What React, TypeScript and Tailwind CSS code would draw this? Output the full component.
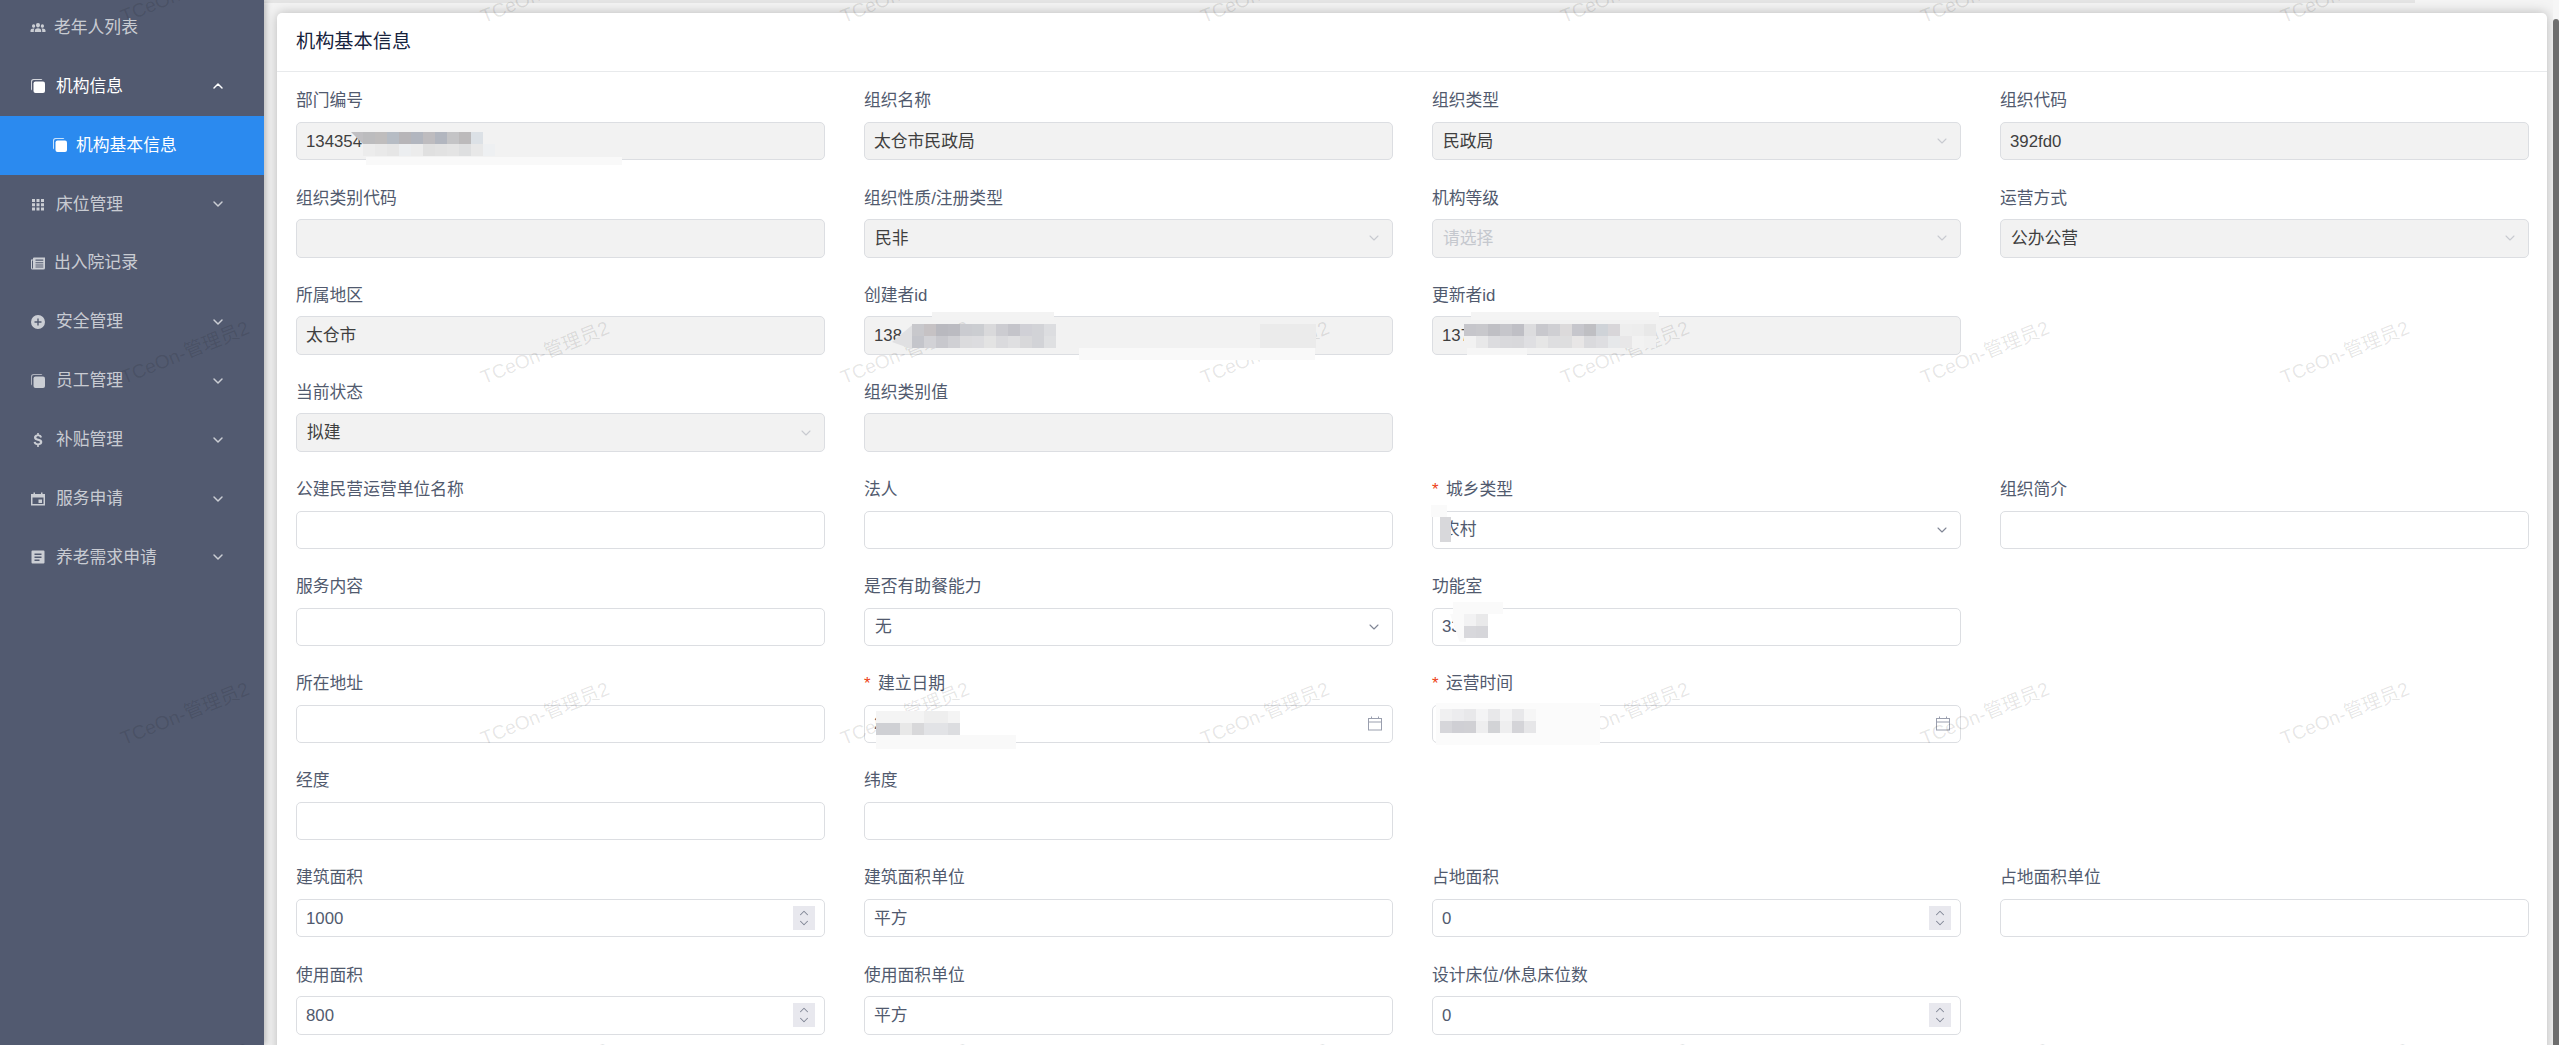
import { ReactNode } from 'react';
import { ChevronDown, ChevronUp } from 'lucide-react';

type IconName = 'people' | 'copy' | 'apps' | 'paper' | 'add' | 'usd' | 'today' | 'list';

function MenuIcon({ name }: { name: IconName }) {
  return (
    <svg viewBox="0 0 16 16" className="h-[16px] w-[16px] shrink-0" fill="currentColor">
      {name === 'people' && (
        <path d="M8 4a2 2 0 0 1 2 2.2c0 1.2-.9 2.3-2 2.3S6 7.400 6 6.200A2 2 0 0 1 8 4zM3.600 5.200a1.600 1.600 0 0 1 1.600 1.700c0 1-.7 1.900-1.600 1.900S2 7.900 2 6.900a1.600 1.600 0 0 1 1.600-1.700zM12.400 5.200A1.600 1.600 0 0 1 14 6.900c0 1-.7 1.900-1.600 1.900s-1.600-.9-1.600-1.900a1.600 1.600 0 0 1 1.600-1.700zM8 9.200c2 0 3.200 1 3.200 2.500V13H4.800v-1.300C4.800 10.200 6 9.200 8 9.200zM3.500 9.500c.4 0 .7 0 1 .1-.5.500-.7 1.200-.7 2V13H.5v-1.400c0-1.300 1.200-2.100 3-2.100zM12.500 9.500c1.800 0 3 .8 3 2.100V13h-3.300v-1.400c0-.8-.2-1.500-.7-2 .3-.1.600-.1 1-.1z" />
      )}
      {name === 'copy' && (
        <>
          <path d="M3.500 1H11a1.500 1.500 0 0 1 1.400 1H4A2 2 0 0 0 2 4v8.400A1.500 1.500 0 0 1 1 11V3.500A2.500 2.500 0 0 1 3.500 1z" opacity="0.75" />
          <rect x="3.500" y="3.500" width="11.500" height="11.500" rx="2" />
        </>
      )}
      {name === 'apps' && (
        <path d="M2 3h3v3H2zM6.500 3h3v3h-3zM11 3h3v3h-3zM2 7.200h3v3H2zM6.500 7.200h3v3h-3zM11 7.200h3v3h-3zM2 11.400h3v3H2zM6.500 11.400h3v3h-3zM11 11.400h3v3h-3z" />
      )}
      {name === 'paper' && (
        <path
          fillRule="evenodd"
          d="M4 2.500h11V13a1.500 1.500 0 0 1-1.500 1.500h-11A1.500 1.500 0 0 1 1 13V4.500h2V3.500a1 1 0 0 1 1-1zM2 5.500V13a.5.500 0 0 0 1 0V5.500zM5.500 4.500v1.200h7.800V4.500zM5.500 7.200v1h7.800v-1zM5.500 9.500v1h7.800v-1zM5.500 11.500v1h7.800v-1z"
        />
      )}
      {name === 'add' && (
        <path
          fillRule="evenodd"
          d="M8 1a7 7 0 1 1 0 14A7 7 0 0 1 8 1zM7.300 4.500v2.800H4.500v1.400h2.800v2.800h1.400V8.700h2.800V7.300H8.700V4.500z"
        />
      )}
      {name === 'usd' && (
        <path d="M7.200 1h1.600v1.500c1.700.2 2.900 1.100 3.200 2.800l-2 .4c-.2-.9-.9-1.400-1.900-1.400-1 0-1.700.4-1.700 1.100 0 .7.600 1 2.100 1.400 2.200.5 3.800 1.200 3.800 3.300 0 1.800-1.300 2.900-3.500 3.100V15H7.200v-1.800C5.200 13 3.900 11.900 3.600 10.100l2.100-.4c.2 1.100 1 1.700 2.300 1.700 1.200 0 1.900-.5 1.900-1.200 0-.8-.700-1.100-2.300-1.500-2-.5-3.600-1.200-3.600-3.200 0-1.700 1.200-2.800 3.200-3z" />
      )}
      {name === 'today' && (
        <path
          fillRule="evenodd"
          d="M3.500 1.500h1.500v1.500h6V1.500h1.500V3H15v11.500H1V3h2.500zM2.500 6.500v6.500h11V6.500zM8.500 8.500H12V12H8.500z"
        />
      )}
      {name === 'list' && (
        <path
          fillRule="evenodd"
          d="M2.500 1.500h11a1 1 0 0 1 1 1v11a1 1 0 0 1-1 1h-11a1 1 0 0 1-1-1v-11a1 1 0 0 1 1-1zM4.500 4.500V6h7V4.500zM4.500 7.500V9h7V7.500zM4.500 10.500V12h5v-1.500z"
        />
      )}
    </svg>
  );
}

const menu: { label: string; icon: IconName; chevron?: 'up' | 'down'; active?: boolean; sub?: boolean; gap?: string }[] = [
  { label: '老年人列表', icon: 'people', gap: 'gap-[8px]' },
  { label: '机构信息', icon: 'copy', chevron: 'up', active: true },
  { label: '机构基本信息', icon: 'copy', sub: true },
  { label: '床位管理', icon: 'apps', chevron: 'down' },
  { label: '出入院记录', icon: 'paper', gap: 'gap-[8px]' },
  { label: '安全管理', icon: 'add', chevron: 'down' },
  { label: '员工管理', icon: 'copy', chevron: 'down' },
  { label: '补贴管理', icon: 'usd', chevron: 'down' },
  { label: '服务申请', icon: 'today', chevron: 'down' },
  { label: '养老需求申请', icon: 'list', chevron: 'down' },
];

function Sidebar() {
  return (
    <aside className="relative z-[1] h-full w-[264px] shrink-0 overflow-hidden bg-[#525a70] shadow-[2px_0_6px_rgba(0,0,0,0.25)]">
      <div className="-mt-[2px] flex flex-col">
        {menu.map((item) => (
          <div
            key={item.label}
            className={
              item.sub
                ? 'flex h-[58.9px] items-center gap-[8px] bg-[#2b8aef] pl-[52px] text-white'
                : `flex h-[58.9px] items-center pl-[30px] pr-[38px] ${item.gap ?? 'gap-[10px]'} ${item.active ? 'text-white' : 'text-white/70'}`
            }
          >
            <MenuIcon name={item.icon} />
            <span className="flex-1">{item.label}</span>
            {item.chevron === 'up' && <ChevronUp size={16} strokeWidth={2.2} />}
            {item.chevron === 'down' && <ChevronDown size={16} strokeWidth={2.2} />}
          </div>
        ))}
      </div>
    </aside>
  );
}

// pixelated patches that hide values in the screenshot
function Mosaic({ className, rows }: { className: string; rows: string[][] }) {
  return (
    <div className={`absolute z-20 flex flex-col ${className}`}>
      {rows.map((row, r) => (
        <div key={r} className="flex">
          {row.map((c, i) => (
            <div key={i} className="h-[12px] w-[12px]" style={{ backgroundColor: c }} />
          ))}
        </div>
      ))}
    </div>
  );
}

function CalendarIcon() {
  return (
    <svg viewBox="0 0 16 16" className="-mt-[1px] h-[17px] w-[16px] text-[#9a9fae]" fill="none" stroke="currentColor" strokeWidth="1">
      <rect x="1.500" y="3" width="13" height="11.500" />
      <path d="M1.500 6.500h13M4.500 1v2M11.500 1v2" />
    </svg>
  );
}

function Spinner() {
  return (
    <div className="flex h-[24px] w-[22px] flex-col items-center justify-center bg-[#e8e8ee] text-[#808695]">
      <ChevronUp size={14} strokeWidth={1.8} className="-mb-[2px]" />
      <ChevronDown size={14} strokeWidth={1.8} className="-mt-[2px]" />
    </div>
  );
}

type FieldProps = {
  label?: string;
  value?: string;
  placeholder?: string;
  disabled?: boolean;
  required?: boolean;
  kind?: 'select' | 'date' | 'number';
  overlay?: ReactNode;
};

function Field({ label, value, placeholder, disabled, required, kind, overlay }: FieldProps) {
  if (!label) return <div />;
  return (
    <div className="flex flex-col">
      <div className="flex h-[24px] items-center pt-[2px] text-[#515a6e]">
        {required && <span className="w-[14px] text-[#ed4014]">*</span>}
        {label}
      </div>
      <div
        className={`relative mt-[10px] flex h-[38.4px] items-center justify-between rounded-[5px] border border-[#dcdee2] pl-[9px] pr-[9px] ${
          disabled ? 'bg-[#f2f2f2] text-[#3f3f3f]' : 'bg-white text-[#515a6e]'
        }`}
      >
        <span className={`${kind === 'select' ? 'pl-[1px]' : ''} ${placeholder ? 'text-[#c5c8ce]' : ''}`}>{value ?? placeholder}</span>
        {kind === 'select' && (
          <ChevronDown size={16} strokeWidth={1.6} className={disabled ? 'mr-[1px] text-[#c8cad0]' : 'mr-[1px] text-[#808695]'} />
        )}
        {kind === 'date' && <CalendarIcon />}
        {kind === 'number' && <Spinner />}
        {overlay}
      </div>
    </div>
  );
}

const fields: FieldProps[] = [
  {
    label: '部门编号',
    value: '134354',
    disabled: true,
    overlay: (
      <>
        <div className="absolute left-[69px] top-[34px] z-20 h-[8px] w-[256px] bg-[#f9f9f9]" />
        <div className="absolute left-[54px] top-[9px] z-20 h-[12px] w-[12px] bg-[#c0bfc2] [clip-path:polygon(0_0,100%_0,100%_100%)]" />
        <Mosaic
          className="left-[54px] top-[9px]"
          rows={[
            ['transparent', '#bcbcbe', '#bfbdbd', '#b6bcc4', '#b7b5b8', '#b2b6bf', '#bebcbf', '#b2b6bf', '#c4c4c6', '#bcbabb', '#dce1e6'],
            ['transparent', '#ececec', '#e9e9e9', '#e6e6e6', '#eceef0', '#ececec', '#e0e0e0', '#e2e2e2', '#e4e4e4', '#dedfe0', '#e8e8e8', '#eef0f2'],
          ]}
        />
      </>
    ),
  },
  { label: '组织名称', value: '太仓市民政局', disabled: true },
  { label: '组织类型', value: '民政局', disabled: true, kind: 'select' },
  { label: '组织代码', value: '392fd0', disabled: true },

  { label: '组织类别代码', disabled: true },
  { label: '组织性质/注册类型', value: '民非', disabled: true, kind: 'select' },
  { label: '机构等级', placeholder: '请选择', disabled: true, kind: 'select' },
  { label: '运营方式', value: '公办公营', disabled: true, kind: 'select' },

  { label: '所属地区', value: '太仓市', disabled: true },
  {
    label: '创建者id',
    value: '138',
    disabled: true,
    overlay: (
      <>
        <div className="absolute left-[67px] top-[-5px] z-20 h-[8px] w-[122px] bg-[#f3f3f3]" />
        <div className="absolute left-[214px] top-[31px] z-20 h-[12px] w-[236px] bg-[#f9f9f9]" />
        <div className="absolute left-[27px] top-[8px] z-20 h-[24px] w-[20px] bg-[#e0e0e2] [clip-path:polygon(100%_0,100%_100%,0_70%)]" />
        <div className="absolute left-[395px] top-[7px] z-20 h-[24px] w-[56px] bg-[#ebebeb]" />
        <Mosaic
          className="left-[47px] top-[7px]"
          rows={[
            ['#c8c8cc', '#c6c2c4', '#b9b9bf', '#bbbbc1', '#cacbd0', '#cbcdd1', '#d9d9db', '#ccccd1', '#c4c4ca', '#d0d0d6', '#d2d3d7', '#dcdde0'],
            ['#c4c5cb', '#d2d2d6', '#c8c8cd', '#d0d0d4', '#dbdbdd', '#dcdcdf', '#e3e3e3', '#dadadd', '#dfdfe1', '#d8d8da', '#d2d3d7', '#dfe0e2'],
          ]}
        />
      </>
    ),
  },
  {
    label: '更新者id',
    value: '137',
    disabled: true,
    overlay: (
      <>
        <div className="absolute left-[38px] top-[-5px] z-20 h-[8px] w-[188px] bg-[#f4f4f4]" />
        <div className="absolute left-[34px] top-[31px] z-20 h-[7px] w-[60px] bg-[#f6f6f6]" />
        <Mosaic
          className="left-[31px] top-[7px]"
          rows={[
            ['#c6c6cb', '#c8c8cc', '#bfbfc4', '#c6c6cb', '#bfbfc5', '#dcdcde', '#c8c8cd', '#cfcfd3', '#dcdadb', '#c6c6cc', '#bfbfc3', '#cfd3d8', '#d8d6d9', '#eeeeee', '#ededed', '#e8e8e8'],
            ['#f2f2f2', '#e8e8e9', '#dcdcdf', '#d9d9dc', '#d8d8db', '#dfdfe2', '#e6e6e6', '#dedee0', '#dededf', '#e8e6e6', '#dadadd', '#dedee1', '#e6e8ea', '#e8e7e8', '#f2f2f2', '#f0f0f0'],
          ]}
        />
      </>
    ),
  },
  {},

  { label: '当前状态', value: '拟建', disabled: true, kind: 'select' },
  { label: '组织类别值', disabled: true },
  {},
  {},

  { label: '公建民营运营单位名称' },
  { label: '法人' },
  {
    label: '城乡类型',
    value: '农村',
    required: true,
    kind: 'select',
    overlay: (
      <>
        <div className="absolute left-[-2px] top-[-7px] z-20 h-[12px] w-[16px] bg-[#fafafa]" />
        <div className="absolute left-[7px] top-[5px] z-20 h-[25px] w-[11px] bg-[#d8d8db]" />
      </>
    ),
  },
  { label: '组织简介' },

  { label: '服务内容' },
  { label: '是否有助餐能力', value: '无', kind: 'select' },
  {
    label: '功能室',
    value: '33',
    overlay: (
      <>
        <div className="absolute left-[20px] top-[-7px] z-20 h-[12px] w-[50px] bg-[#fafafa]" />
        <div className="absolute left-[17px] top-[5px] z-20 h-[28px] w-[16px] bg-[#fafafa] [clip-path:polygon(0_0,100%_0,100%_100%,60%_100%)]" />
        <Mosaic
          className="left-[31px] top-[5px]"
          rows={[
            ['#f2f2f3', '#e9e9ea'],
            ['#d8d8dc', '#d6d6da'],
          ]}
        />
      </>
    ),
  },
  {},

  { label: '所在地址' },
  {
    label: '建立日期',
    value: '2',
    required: true,
    kind: 'date',
    overlay: (
      <>
        <div className="absolute left-[11px] top-[29px] z-20 h-[14px] w-[140px] bg-[#f9f9f9]" />
        <Mosaic
          className="left-[11px] top-[5px]"
          rows={[
            ['#f4f4f4', '#f4f4f4', '#f4f4f4', '#f4f4f4', '#eeeeee', '#eeeeee', '#f4f4f4'],
            ['#cfd0d4', '#cfd0d4', '#e8e8e8', '#d8d8da', '#e2e3e6', '#e2e3e6', '#dcdde0'],
          ]}
        />
      </>
    ),
  },
  {
    label: '运营时间',
    value: '2',
    required: true,
    kind: 'date',
    overlay: (
      <>
        <div className="absolute left-[3px] top-[-3px] z-20 h-[42px] w-[164px] bg-[#fbfbfb]" />
        <Mosaic
          className="left-[7px] top-[3px]"
          rows={[
            ['#f0f0f1', '#ececee', '#e8e8ea', '#f4f4f5', '#e8e8ea', '#f3f3f4', '#e8e8ea', '#f6f6f6'],
            ['#d6d6da', '#cfcfd4', '#d0d0d4', '#eeeeef', '#d2d3d6', '#eeeeef', '#d4d4d8', '#e6e6e8'],
          ]}
        />
      </>
    ),
  },
  {},

  { label: '经度' },
  { label: '纬度' },
  {},
  {},

  { label: '建筑面积', value: '1000', kind: 'number' },
  { label: '建筑面积单位', value: '平方' },
  { label: '占地面积', value: '0', kind: 'number' },
  { label: '占地面积单位' },

  { label: '使用面积', value: '800', kind: 'number' },
  { label: '使用面积单位', value: '平方' },
  { label: '设计床位/休息床位数', value: '0', kind: 'number' },
  {},
];

// repeated account name laid over the whole page
function Watermarks() {
  const marks = Array.from({ length: 32 }, (_, i) => i);
  return (
    <div className="pointer-events-none absolute inset-0 z-10 overflow-hidden">
      <div className="-mt-[188px] ml-[5px] grid w-[2880px] grid-cols-[repeat(8,360px)] auto-rows-[361px]">
        {marks.map((i) => (
          <div key={i} className="flex items-center justify-center">
            <span className="-rotate-[22deg] whitespace-nowrap text-[19.2px] text-black/10">TCeOn-管理员2</span>
          </div>
        ))}
      </div>
    </div>
  );
}

export default function App() {
  return (
    <div className="relative flex h-screen w-full overflow-hidden bg-[#f4f4f4] text-[16.8px] font-['Liberation_Sans','Noto_Sans_CJK_SC',sans-serif]">
      <Sidebar />
      <main className="relative flex min-w-0 flex-1 overflow-hidden">
        <div className="absolute left-0 top-0 h-[3px] w-[2151px] bg-[#e4e4e4]" />
        <div className="relative min-w-0 flex-1 pl-[13px] pr-[6px] pt-[13px]">
          <div className="rounded-[5px] bg-white shadow-[0_0_12px_rgba(0,0,0,0.25)]">
            <div className="flex h-[59px] items-center border-b border-[#e8eaec] pl-[19px] text-[19.2px] text-[#17233d]">机构基本信息</div>
            <div className="grid grid-cols-[repeat(4,529px)] auto-rows-[97.14px] gap-x-[39px] pl-[19px] pt-[16px]">
              {fields.map((f, i) => (
                <Field key={i} {...f} />
              ))}
            </div>
          </div>
        </div>
        <div className="relative z-[5] w-[6px] shrink-0 bg-[#f6f6f6] pt-[19px]">
          <div className="h-full rounded-t-[3px] bg-[#6e6e6e]" />
        </div>
      </main>
      <Watermarks />
    </div>
  );
}
